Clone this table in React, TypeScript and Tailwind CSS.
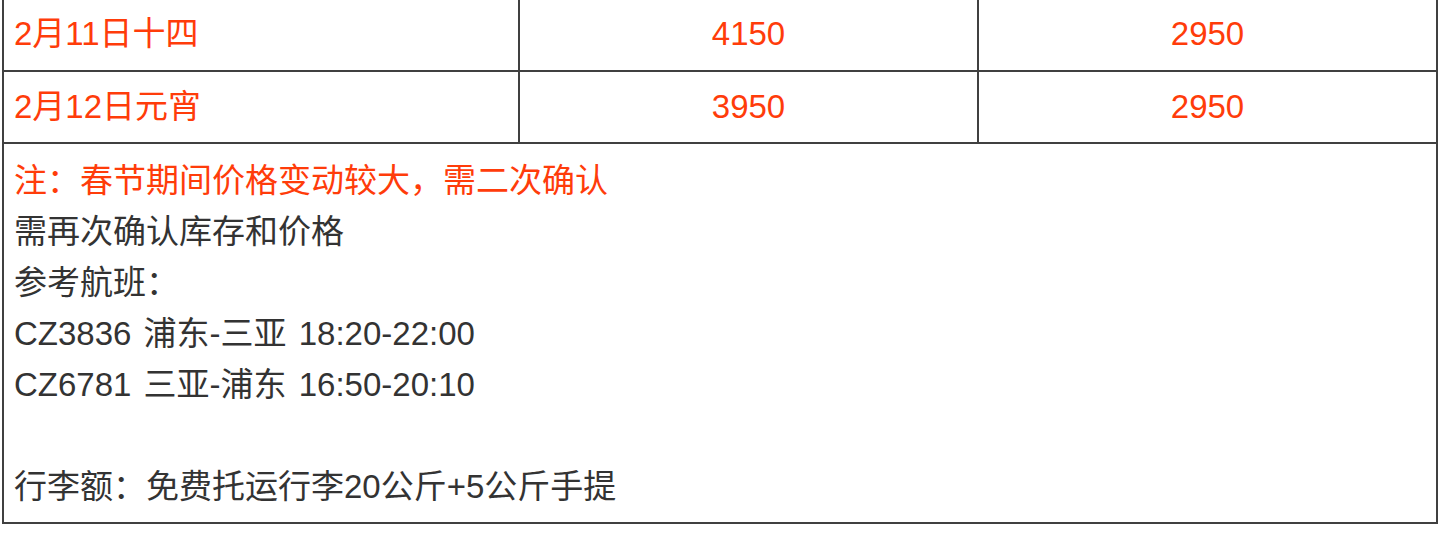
const rows = [
  { date: "2月11日十四", a: "4150", b: "2950", pad: "pb-[2px]" },
  { date: "2月12日元宵", a: "3950", b: "2950", pad: "" },
];

export default function App() {
  return (
    <div className="min-h-[533px] bg-white font-['Liberation_Sans','Noto_Sans_CJK_SC',sans-serif] text-[33px] text-[#333333]">
      <div className="ml-[2px] w-[1436px] border-2 border-t-0 border-[#404040]">
        {rows.map((r) => (
          <div key={r.date} className="flex h-[72px] border-b-2 border-[#404040] text-[#ff3c0a]">
            <div className={`flex w-[516px] items-center border-r-2 border-[#404040] pl-[10px] ${r.pad}`}>
              {r.date}
            </div>
            <div className={`flex w-[459px] items-center justify-center border-r-2 border-[#404040] ${r.pad}`}>
              {r.a}
            </div>
            <div className={`flex flex-1 items-center justify-center ${r.pad}`}>{r.b}</div>
          </div>
        ))}

        {/* note cell */}
        <div className="pl-[10px] pt-[11px] pb-[10px] leading-[51px]">
          <div className="text-[#ff3c0a]">注：春节期间价格变动较大，需二次确认</div>
          <div>需再次确认库存和价格</div>
          <div>参考航班：</div>
          <div className="[word-spacing:3px]">CZ3836 浦东-三亚 18:20-22:00</div>
          <div className="[word-spacing:3px]">CZ6781 三亚-浦东 16:50-20:10</div>
          <div className="h-[51px]" />
          <div>行李额：免费托运行李20公斤+5公斤手提</div>
        </div>
      </div>
    </div>
  );
}
